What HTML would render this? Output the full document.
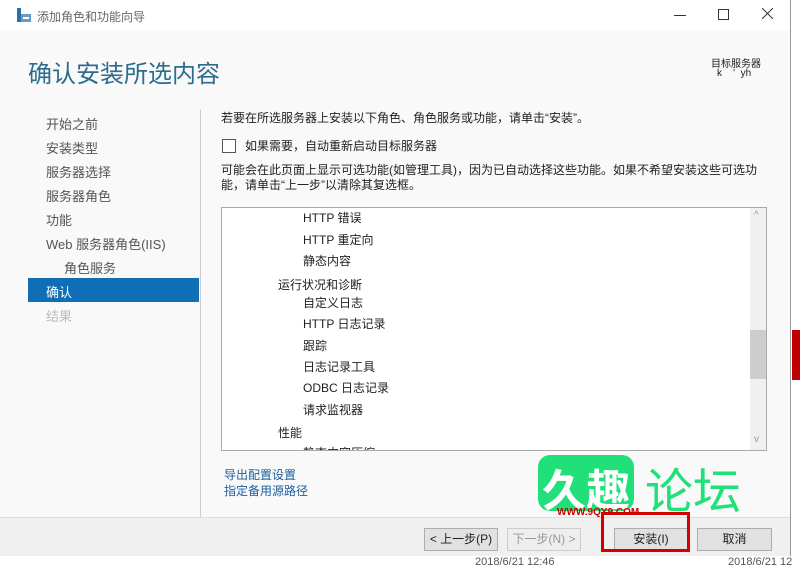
<!DOCTYPE html><html><head><meta charset="utf-8"><style>
body{margin:0;width:800px;height:567px;position:relative;overflow:hidden;background:#fff;font-family:"Liberation Sans","Noto Sans CJK SC",sans-serif;font-size:12px;color:#1e1e1e}
.a{position:absolute;white-space:nowrap}
.win{position:absolute;left:0;top:0;width:790px;height:555px;border-right:1px solid #999;border-bottom:1px solid #999;background:#f9f9f9}
.nav{font-size:13px;color:#555}
.btn{position:absolute;top:528px;height:21px;border:1px solid #adadad;background:#e1e1e1;text-align:center;line-height:21px;font-size:12px}
</style></head><body>
<div class="a" style="left:792px;top:330px;width:8px;height:50px;background:#c00000"></div>
<div class="win">
<div class="a" style="left:0;top:0;width:790px;height:30px;background:#fff"></div>
<svg class="a" style="left:16px;top:8px" width="16" height="14"><rect x="1" y="0" width="4" height="14" fill="#2d6fa8"/><rect x="5" y="6" width="10" height="8" fill="#6a9cc6"/><rect x="7" y="9" width="6" height="2" fill="#fff"/></svg>
<div class="a" style="left:37px;top:8px;color:#666;font-size:12px">添加角色和功能向导</div>
<div class="a" style="left:674px;top:15px;width:12px;height:1px;background:#333"></div>
<div class="a" style="left:718px;top:9px;width:9px;height:9px;border:1px solid #333"></div>
<svg class="a" style="left:762px;top:8px" width="11" height="11"><path d="M0 0L11 11M11 0L0 11" stroke="#333" stroke-width="1"/></svg>
<div class="a" style="left:28px;top:54px;font-size:24px;color:#2b6c8f">确认安装所选内容</div>
<div class="a" style="left:711px;top:55px;font-size:10px">目标服务器</div>
<div class="a" style="left:717px;top:68px;font-size:10px">k &nbsp; &nbsp;' &nbsp;yh</div>
<div class="a nav" style="left:46px;top:114px">开始之前</div>
<div class="a nav" style="left:46px;top:138px">安装类型</div>
<div class="a nav" style="left:46px;top:162px">服务器选择</div>
<div class="a nav" style="left:46px;top:186px">服务器角色</div>
<div class="a nav" style="left:46px;top:210px">功能</div>
<div class="a nav" style="left:46px;top:234px">Web 服务器角色(IIS)</div>
<div class="a nav" style="left:64px;top:258px">角色服务</div>
<div class="a" style="left:28px;top:278px;width:171px;height:24px;background:#0f6eb5"></div>
<div class="a nav" style="left:46px;top:282px;color:#fff">确认</div>
<div class="a nav" style="left:46px;top:306px;color:#bbb">结果</div>
<div class="a" style="left:200px;top:110px;width:1px;height:407px;background:#ccc"></div>
<div class="a" style="left:221px;top:109px">若要在所选服务器上安装以下角色、角色服务或功能，请单击“安装”。</div>
<div class="a" style="left:222px;top:139px;width:12px;height:12px;border:1px solid #555;background:#fff"></div>
<div class="a" style="left:245px;top:137px">如果需要，自动重新启动目标服务器</div>
<div class="a" style="left:221px;top:161px">可能会在此页面上显示可选功能(如管理工具)，因为已自动选择这些功能。如果不希望安装这些可选功</div>
<div class="a" style="left:221px;top:176px">能，请单击“上一步”以清除其复选框。</div>
<div class="a" style="left:221px;top:207px;width:544px;height:242px;border:1px solid #aaa;background:#fff;overflow:hidden">
<div class="a" style="left:81px;top:1px">HTTP 错误</div>
<div class="a" style="left:81px;top:23px">HTTP 重定向</div>
<div class="a" style="left:81px;top:44px">静态内容</div>
<div class="a" style="left:56px;top:68px">运行状况和诊断</div>
<div class="a" style="left:81px;top:86px">自定义日志</div>
<div class="a" style="left:81px;top:107px">HTTP 日志记录</div>
<div class="a" style="left:81px;top:129px">跟踪</div>
<div class="a" style="left:81px;top:150px">日志记录工具</div>
<div class="a" style="left:81px;top:171px">ODBC 日志记录</div>
<div class="a" style="left:81px;top:193px">请求监视器</div>
<div class="a" style="left:56px;top:216px">性能</div>
<div class="a" style="left:81px;top:236px">静态内容压缩</div>
<div class="a" style="left:528px;top:0;width:16px;height:242px;background:#f0f0f0"></div>
<div class="a" style="left:528px;top:122px;width:16px;height:49px;background:#cdcdcd"></div>
<div class="a" style="left:532px;top:2px;color:#999;font-size:10px">^</div>
<div class="a" style="left:532px;top:226px;color:#999;font-size:10px">v</div>
</div>
<div class="a" style="left:224px;top:466px;color:#1a5fa0">导出配置设置</div>
<div class="a" style="left:224px;top:482px;color:#1a5fa0">指定备用源路径</div>
<div class="a" style="left:0;top:517px;width:790px;height:38px;background:#f0f0f0;border-top:1px solid #ddd"></div>
<div class="btn" style="left:424px;width:72px">&lt; 上一步(P)</div>
<div class="btn" style="left:507px;width:72px;color:#999;border-color:#ccc;background:#eee">下一步(N) &gt;</div>
<div class="btn" style="left:614px;width:72px">安装(I)</div>
<div class="btn" style="left:697px;width:73px">取消</div>
<div class="a" style="left:601px;top:512px;width:89px;height:40px;border:3px solid #d40000;box-sizing:border-box"></div>
<div class="a" style="left:538px;top:455px;width:96px;height:56px;background:#21e07a;border-radius:12px"></div>
<div class="a" style="left:542px;top:455px;font-size:44px;font-weight:bold;color:#fff">久趣</div>
<div class="a" style="left:645px;top:452px;font-size:48px;color:#21e07a">论坛</div>
<div class="a" style="left:557px;top:507px;font-size:10px;font-weight:bold;color:#c00">WWW.9QY9.COM</div>
</div>
<div class="a" style="left:475px;top:556px;color:#555;font-size:11px">2018/6/21 12:46</div>
<div class="a" style="left:728px;top:556px;color:#555;font-size:11px">2018/6/21 12</div>
</body></html>
